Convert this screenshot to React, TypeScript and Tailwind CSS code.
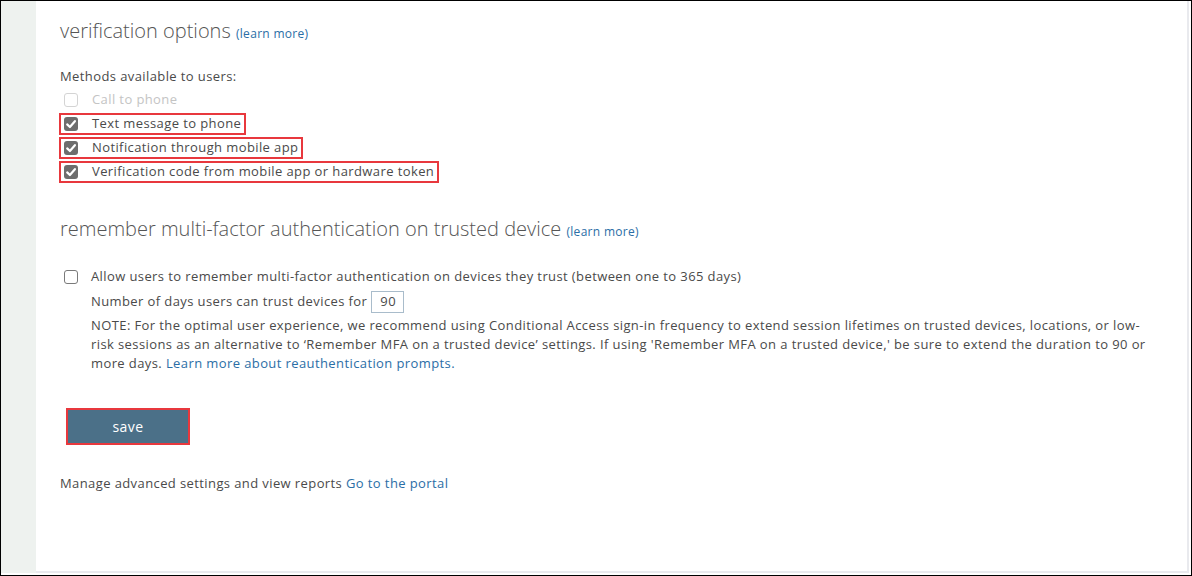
import React from "react";

const RED = "border-[#e8383d]";

function Box({ state }: { state: "checked" | "empty" | "disabled" }) {
  if (state === "checked") {
    return (
      <span className="flex h-[14px] w-[14px] items-center justify-center rounded-[3px] bg-[#6d6d6d]">
        <svg viewBox="0 0 14 14" className="h-[14px] w-[14px]">
          <path d="M3.2 7.4 L5.9 10 L10.9 4.2" fill="none" stroke="#fff" strokeWidth="2.2" strokeLinecap="round" strokeLinejoin="round" />
        </svg>
      </span>
    );
  }
  return (
    <span
      className={
        state === "disabled"
          ? "h-[14px] w-[14px] rounded-[3px] border border-[#d4d4d4] bg-white"
          : "h-[14px] w-[14px] rounded-[3px] border border-[#7a7a7a] bg-white"
      }
    />
  );
}

function Method({ label, state, marked }: { label: string; state: "checked" | "disabled"; marked?: boolean }) {
  return (
    <div className="flex h-[24px] items-center">
      <span
        className={`-ml-px inline-flex h-[22px] items-center border-2 pl-[3px] pr-[3px] ${marked ? RED : "border-transparent"}`}
      >
        <Box state={state} />
        <span className={`ml-[14px] ${state === "disabled" ? "text-[#c4c4c4]" : "text-[#4a4a4a]"}`}>{label}</span>
      </span>
    </div>
  );
}

export default function App() {
  return (
    <div className="flex h-[576px] w-[1192px] border border-black bg-white pb-[2px] pr-[2px] font-['Open_Sans',sans-serif] text-[13px] tracking-[0.4px] text-[#4a4a4a]">
      <div className="w-[35px] shrink-0 bg-[#eef2ef]" />
      <div className="flex-1 border-b-2 border-r-2 border-[#e9eaee] pl-6">
        <h2 className="mt-4 h-[28px] text-[20px] font-light leading-[28px] tracking-normal text-[#555]">
          verification options{" "}
          <a className="text-[12px] font-normal tracking-[0.3px] text-[#2b6ea6]">(learn more)</a>
        </h2>

        <div className="mt-[19px] leading-[24px]">Methods available to users:</div>
        <Method label="Call to phone" state="disabled" />
        <Method label="Text message to phone" state="checked" marked />
        <Method label="Notification through mobile app" state="checked" marked />
        <Method label="Verification code from mobile app or hardware token" state="checked" marked />

        <h2 className="mt-[31px] h-[28px] text-[20px] font-light leading-[28px] tracking-normal text-[#555]">
          remember multi-factor authentication on trusted device{" "}
          <a className="text-[12px] font-normal tracking-[0.3px] text-[#2b6ea6]">(learn more)</a>
        </h2>

        <div className="mt-[22px] flex h-[24px] items-center pl-1">
          <Box state="empty" />
          <span className="ml-[13px]">
            Allow users to remember multi-factor authentication on devices they trust (between one to 365 days)
          </span>
        </div>
        <div className="ml-[31px] mt-px flex h-[24px] items-center">
          <span>Number of days users can trust devices for</span>
          <span className="ml-[4px] flex h-[22px] w-[33px] items-center border border-[#a9bccb] pl-[8px]">90</span>
        </div>
        <p className="ml-[31px] mt-[2px] w-[1060px] leading-[19px]">
          NOTE: For the optimal user experience, we recommend using Conditional Access sign-in frequency to extend
          session lifetimes on trusted devices, locations, or low-risk sessions as an alternative to ‘Remember MFA on a
          trusted device’ settings. If using 'Remember MFA on a trusted device,' be sure to extend the duration to 90 or
          more days. <a className="text-[#2b6ea6]">Learn more about reauthentication prompts.</a>
        </p>

        <div className="ml-[6px] mt-[35px] w-[124px] border-2 border-[#e8383d]">
          <button className="h-[33px] w-full bg-[#4b7088] text-[14px] text-white">save</button>
        </div>

        <div className="mt-[26px] leading-[24px]">
          Manage advanced settings and view reports <a className="text-[#2b6ea6]">Go to the portal</a>
        </div>
      </div>
    </div>
  );
}
